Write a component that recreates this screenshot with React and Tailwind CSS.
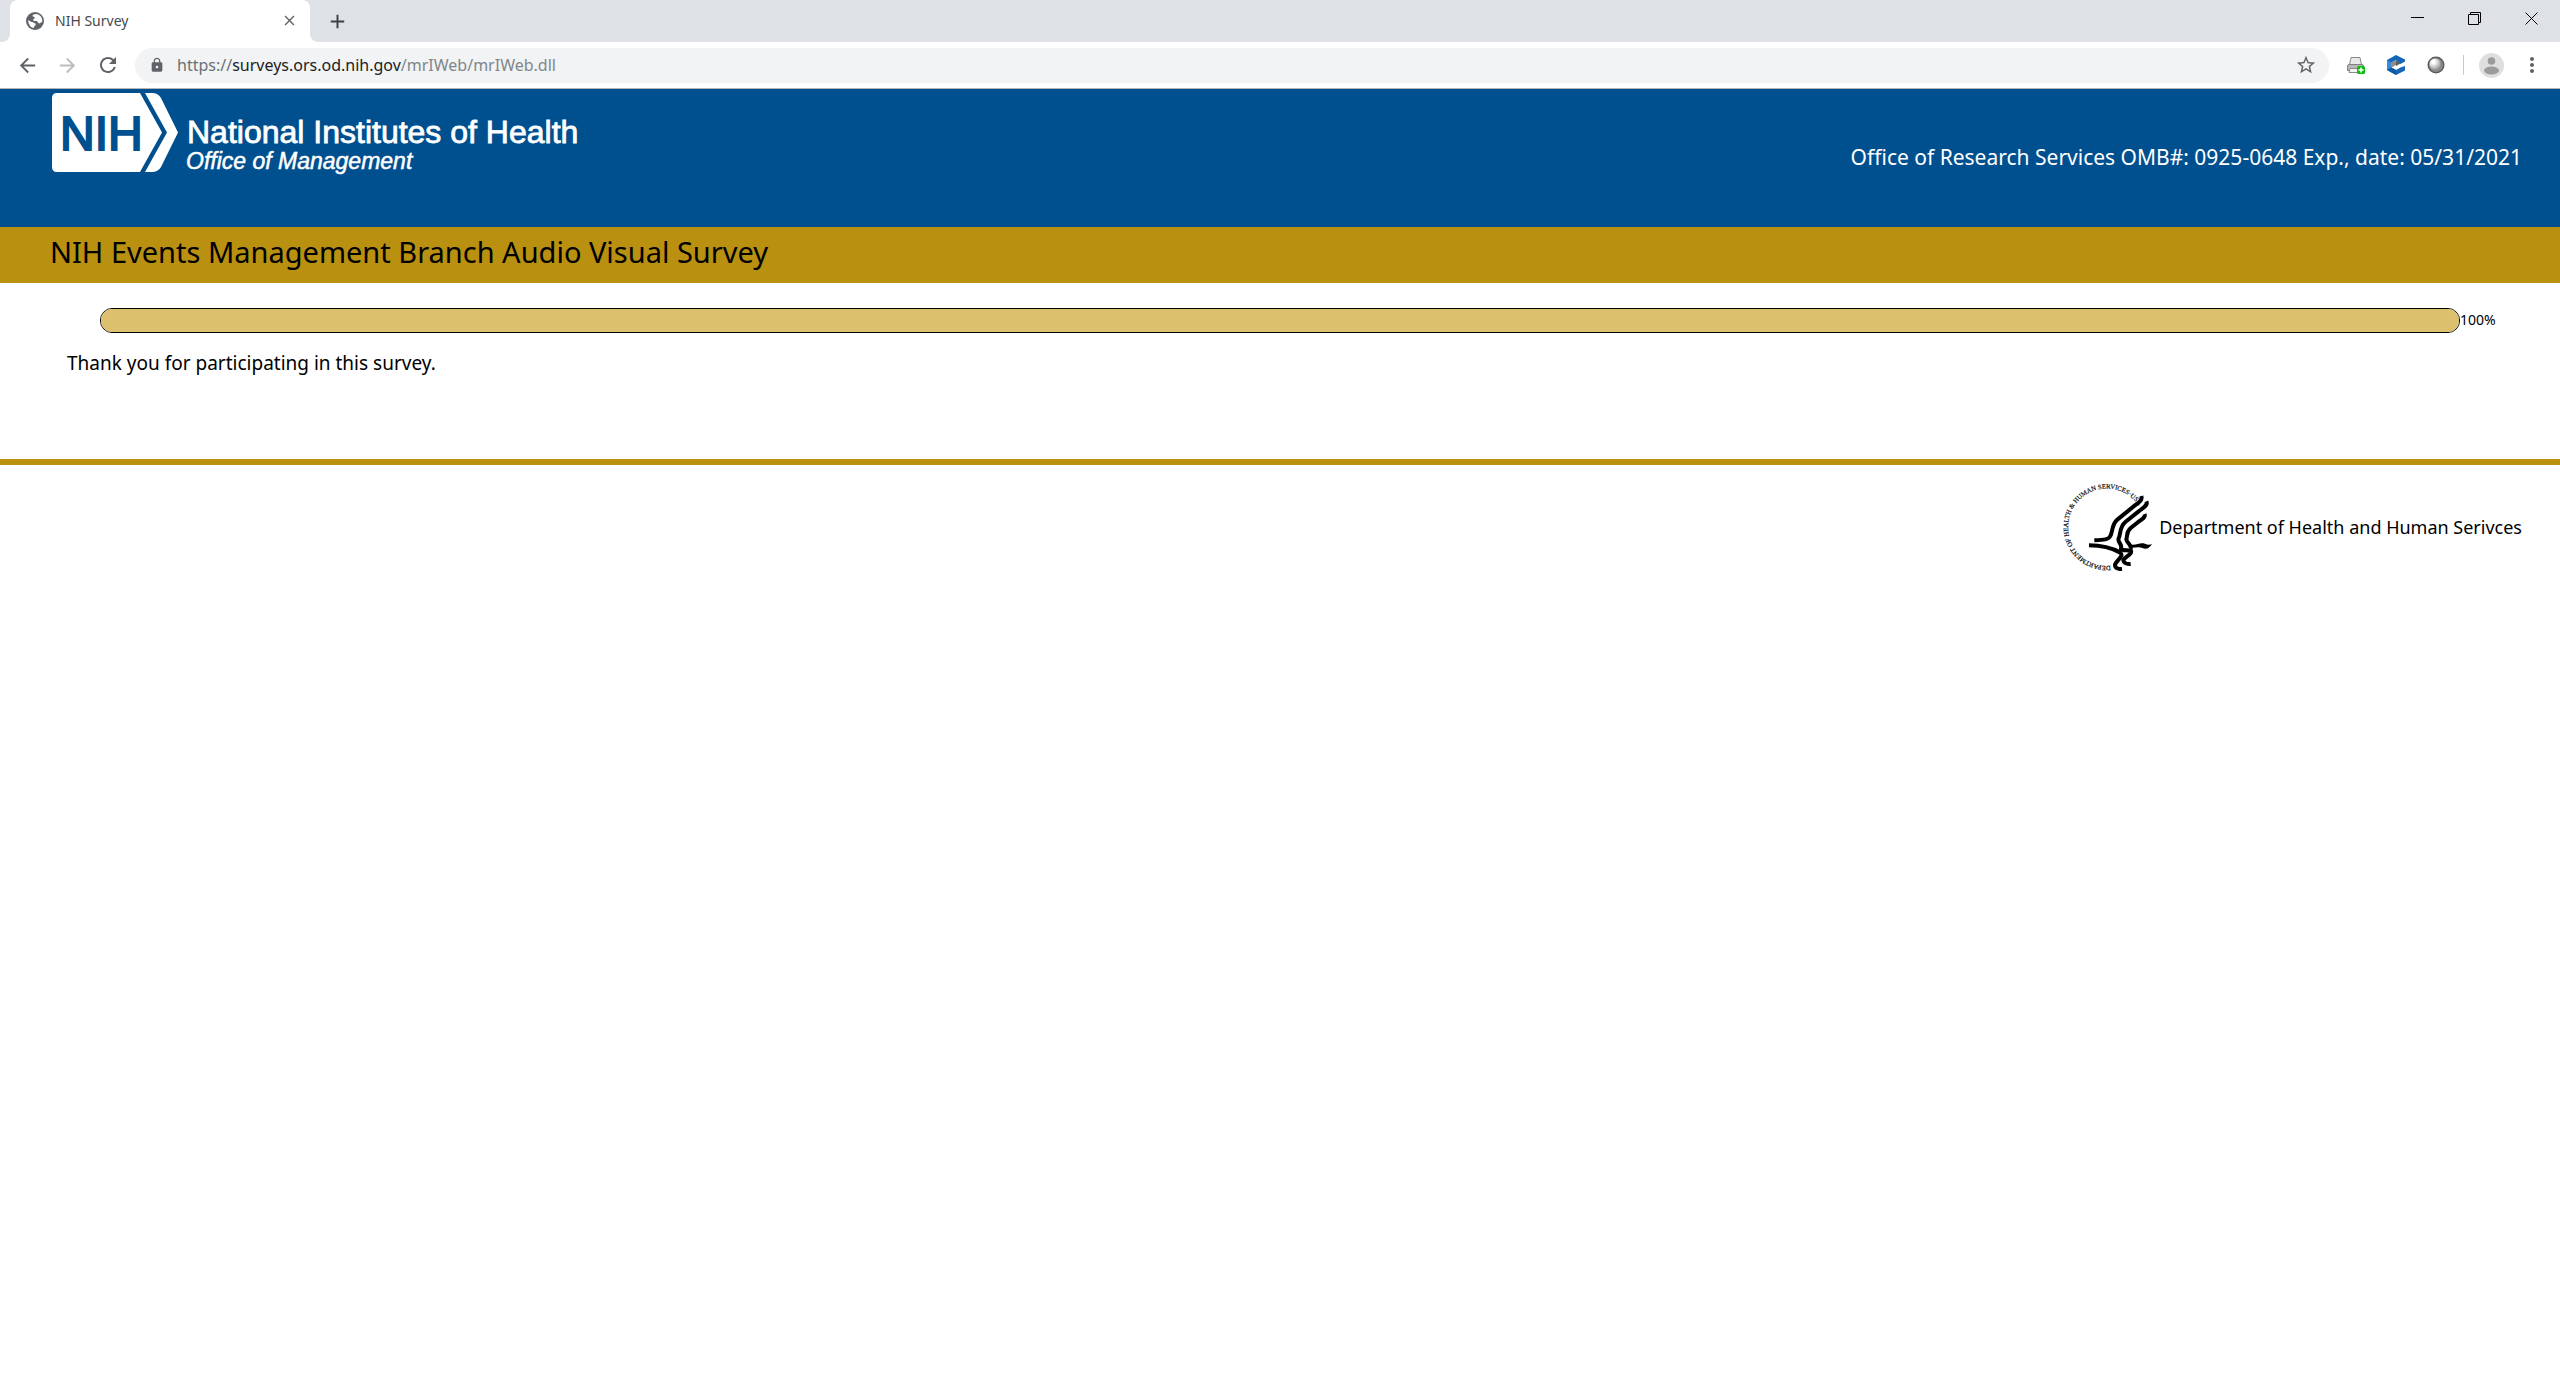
import {
  MdArrowBack,
  MdArrowForward,
  MdRefresh,
  MdLock,
  MdStarBorder,
  MdMoreVert,
  MdClose,
  MdAdd,
} from "react-icons/md";

const GlobeIcon = () => (
  <svg width="18" height="18" viewBox="0 0 54 54">
    <circle cx="27" cy="27" r="27" fill="#5f6368" />
    <path d="M20 9Q30 3 38 8Q50 15 49 29L43 33Q38 36 35 31L33 27H25Q20 27 22 22L26 19Q28 15 24 15Q18 14 20 9Z" fill="#fff" />
    <path d="M6 24L15 29Q24 30 29 35Q31 39 26 41L23 48Q8 45 6 24Z" fill="#fff" />
  </svg>
);

const TabStrip = () => {
  return (
    <div className="flex h-[42px] items-end bg-[#dee1e6] pl-[2px]">
      <div className="h-2 w-2 bg-white">
        <div className="h-2 w-2 rounded-br-lg bg-[#dee1e6]"></div>
      </div>
      <div className="flex h-[42px] w-[300px] items-center rounded-t-lg bg-white pr-3 pb-px pl-4">
        <GlobeIcon />
        <span className="ml-[11px] flex-1 text-sm text-[#45494d]">NIH Survey</span>
        <button aria-label="Close tab" className="text-[#5f6368]">
          <MdClose size={17} />
        </button>
      </div>
      <div className="h-2 w-2 bg-white">
        <div className="h-2 w-2 rounded-bl-lg bg-[#dee1e6]"></div>
      </div>
      <button
        aria-label="New tab"
        className="ml-2 flex h-[42px] items-center text-[#3c4043]"
      >
        <MdAdd size={23} />
      </button>

      <div className="ml-auto flex h-[34px] items-center self-start text-black">
        <button aria-label="Minimize" className="flex h-full w-[57px] items-center justify-center">
          <svg width="13" height="13" viewBox="0 0 13 13">
            <path d="M0 6.5H13" stroke="currentColor" />
          </svg>
        </button>
        <button aria-label="Restore" className="flex h-full w-[57px] items-center justify-center pt-[3px]">
          <svg width="13" height="13" viewBox="0 0 13 13" fill="none" stroke="currentColor">
            <path d="M.5 2.5h10v10h-10zM2.5 2.5V.5h10v10h-2" />
          </svg>
        </button>
        <button aria-label="Close" className="flex h-full w-[57px] items-center justify-center pt-[3px]">
          <svg width="13" height="13" viewBox="0 0 13 13" fill="none" stroke="currentColor">
            <path d="M.5.5l12 12M12.5.5l-12 12" />
          </svg>
        </button>
      </div>
    </div>
  );
};

const PrinterIcon = () => (
  <svg width="18" height="17" viewBox="0 0 18 17">
    <path d="M4 .5h9l1.500 7h-12z" fill="#e9e9e9" stroke="#8a8a8a" />
    <path d="M.5 9Q.5 7.500 2 7.500h13q1.500 0 1.500 1.500v4.500h-16z" fill="#b9b9b9" stroke="#808080" />
    <path d="M3 11.500h9v4H2z" fill="#f4f4f4" stroke="#8a8a8a" />
    <rect x="10" y="9" width="8" height="8" rx="1.500" fill="#0fbd0f" />
    <path d="M14 10.500v5M11.500 13h5" stroke="#fff" strokeWidth="1.500" />
  </svg>
);

const CubeIcon = () => (
  <svg width="18" height="20" viewBox="0 0 18 20">
    <path d="M9 0l9 4.500v2L13.500 9 9 5 4.500 7.500v5L9 15l4.500-2.500L18 11v4.500L9 20l-9-5V5z" fill="#1467b8" />
    <path d="M0 5l4.500 2.500v5L0 15z" fill="#3a8ad6" />
    <path d="M0 15l4.500-2.500L9 15v5z" fill="#0f5ba6" />
    <path d="M4.500 7.500L9 5v5l-4.500 2.500z" fill="#8d8d8d" />
    <path d="M9 5l4.500 3.500L9 11z" fill="#5e5e5e" />
  </svg>
);

const OrbIcon = () => (
  <svg width="18" height="18" viewBox="0 0 18 18">
    <defs>
      <radialGradient id="orb" cx="0.35" cy="0.3" r="0.7">
        <stop offset="0.2" stopColor="#ffffff" />
        <stop offset="1" stopColor="#a5a5a5" />
      </radialGradient>
    </defs>
    <circle cx="9" cy="9" r="8.500" fill="#5c5c5c" />
    <circle cx="9" cy="9" r="7" fill="#8b8b8b" />
    <circle cx="8" cy="8" r="5.500" fill="url(#orb)" />
  </svg>
);

const AddressBar = () => {
  return (
    <div className="flex h-[47px] items-center border-b border-[#b5b5b5] bg-white pr-4 pl-4 text-[#5f6368]">
      <button aria-label="Back">
        <MdArrowBack size={23} />
      </button>
      <button aria-label="Forward" className="ml-[17px] text-[#babcbe]">
        <MdArrowForward size={23} />
      </button>
      <button aria-label="Reload" className="ml-[17px]">
        <MdRefresh size={24} />
      </button>
      <div className="ml-[15px] flex h-[35px] flex-1 items-center rounded-full bg-[#f1f3f4] pr-3 pl-[14px]">
        <MdLock size={16} />
        <a href="#" className="ml-[12px] flex-1 text-base text-[#80868b]">
          <span className="text-[#6b7075]">https://</span>
          <span className="text-[#202124]">surveys.ors.od.nih.gov</span>
          /mrIWeb/mrIWeb.dll
        </a>
        <button aria-label="Bookmark">
          <MdStarBorder size={22} />
        </button>
      </div>
      <div className="ml-[18px] flex items-center gap-[22px]">
        <button aria-label="Print">
          <PrinterIcon />
        </button>
        <button aria-label="Extension">
          <CubeIcon />
        </button>
        <button aria-label="Recorder">
          <OrbIcon />
        </button>
      </div>
      <div className="ml-[18px] h-5 w-px bg-[#c8cacc]"></div>
      <button aria-label="Account" className="ml-[15px]">
        <svg width="25" height="25" viewBox="0 0 25 25">
          <circle cx="12.500" cy="12.500" r="12.500" fill="#dedede" />
          <circle cx="12.500" cy="8" r="3.800" fill="#9b9b9b" />
          <ellipse cx="12.500" cy="17.500" rx="7.500" ry="4" fill="#9b9b9b" />
        </svg>
      </button>
      <button aria-label="Menu" className="ml-4">
        <MdMoreVert size={24} />
      </button>
    </div>
  );
};

const NihLogo = () => (
  <svg
    width="534"
    height="84"
    viewBox="0 0 534 84"
    role="img"
    aria-label="National Institutes of Health, Office of Management"
    fontFamily="'Liberation Sans', Arial, sans-serif"
  >
    <path d="M7 1H90L112 40.500L90 80H7Q2 80 2 75V6Q2 1 7 1Z" fill="#fff" />
    <path d="M95 1H102Q108 1 111 6L128 40.500L111 75Q108 80 102 80H95L117 40.500Z" fill="#fff" />
    <text x="10" y="58" fontSize="48" fill="#00508f" stroke="#00508f" strokeWidth="2">
      NIH
    </text>
    <text x="137" y="51" fontSize="32" fill="#fff" stroke="#fff" strokeWidth="0.800">
      National Institutes of Health
    </text>
    <text x="136" y="77" fontSize="23" fontStyle="italic" fill="#fff" stroke="#fff" strokeWidth="0.500">
      Office of Management
    </text>
  </svg>
);

const HhsSeal = () => (
  <svg
    width="90"
    height="88"
    viewBox="69 39 270 264"
    role="img"
    aria-label="Department of Health and Human Services seal"
  >
    <defs>
      <path id="ring" d="M212 287A116 116 0 1 1 316 172" />
    </defs>
    <text fontFamily="'Liberation Serif', serif" fontSize="20" fill="#000" stroke="#000" strokeWidth="0.500">
      <textPath href="#ring">DEPARTMENT OF HEALTH &amp; HUMAN SERVICES·USA</textPath>
    </text>
    <g fill="none" stroke="#000" strokeWidth="12">
      <path d="M304 78C308 92 296 97 280 110L232 149C215 163 218 186 211 198C206 209 192 210 163 211" />
      <path d="M319 94C325 106 310 113 296 124L256 156C238 171 243 190 236 205C231 216 248 222 243 237C248 244 265 238 273 243C278 252 255 260 250 270C251 279 262 283 272 282" />
      <path d="M314 132C318 143 304 148 292 158L272 174C257 187 263 199 259 208C260 218 276 226 272 237" />
      <path d="M147 226C178 226 216 234 241 248C253 258 229 272 225 284C225 295 235 298 246 297" />
    </g>
    <path d="M268 222C287 229 299 215 315 221Q326 227 336 222Q325 241 309 235C296 228 283 235 268 233Z" />
  </svg>
);

const App = () => {
  const progress = 100;

  return (
    <div className="min-h-screen bg-white font-['Noto_Sans',sans-serif] text-black">
      <TabStrip />
      <AddressBar />

      <header className="flex h-[138px] items-start justify-between bg-[#00508f] pt-[3px] pr-[38px] pl-[50px] text-white">
        <NihLogo />
        <p className="mt-[50px] text-[21px] leading-[30px]">
          Office of Research Services OMB#: 0925-0648 Exp., date: 05/31/2021
        </p>
      </header>

      <div className="h-14 bg-[#b99010] pl-[50px]">
        <h1 className="text-[29px] leading-[50px]">
          NIH Events Management Branch Audio Visual Survey
        </h1>
      </div>

      <main className="h-[176px] pt-[25px]">
        <div className="flex items-center pr-[50px] pl-[100px]">
          <div
            role="progressbar"
            aria-label="Survey progress"
            aria-valuenow={progress}
            className="h-[25px] flex-1 overflow-hidden rounded-xl border border-black bg-[#dcc06e]"
          >
            <div className="h-full bg-[#dcc06e]" style={{ width: `${progress}%` }}></div>
          </div>
          <span className="w-[50px] pb-0.5 text-sm">{progress}%</span>
        </div>
        <p className="mt-4 pl-[67px] text-[19px] leading-7">
          Thank you for participating in this survey.
        </p>
      </main>

      <footer className="flex items-center justify-end gap-1.5 border-t-[6px] border-[#b99010] pt-[18px] pr-[38px]">
        <HhsSeal />
        <span className="text-lg">Department of Health and Human Serivces</span>
      </footer>
    </div>
  );
};

export default App;
